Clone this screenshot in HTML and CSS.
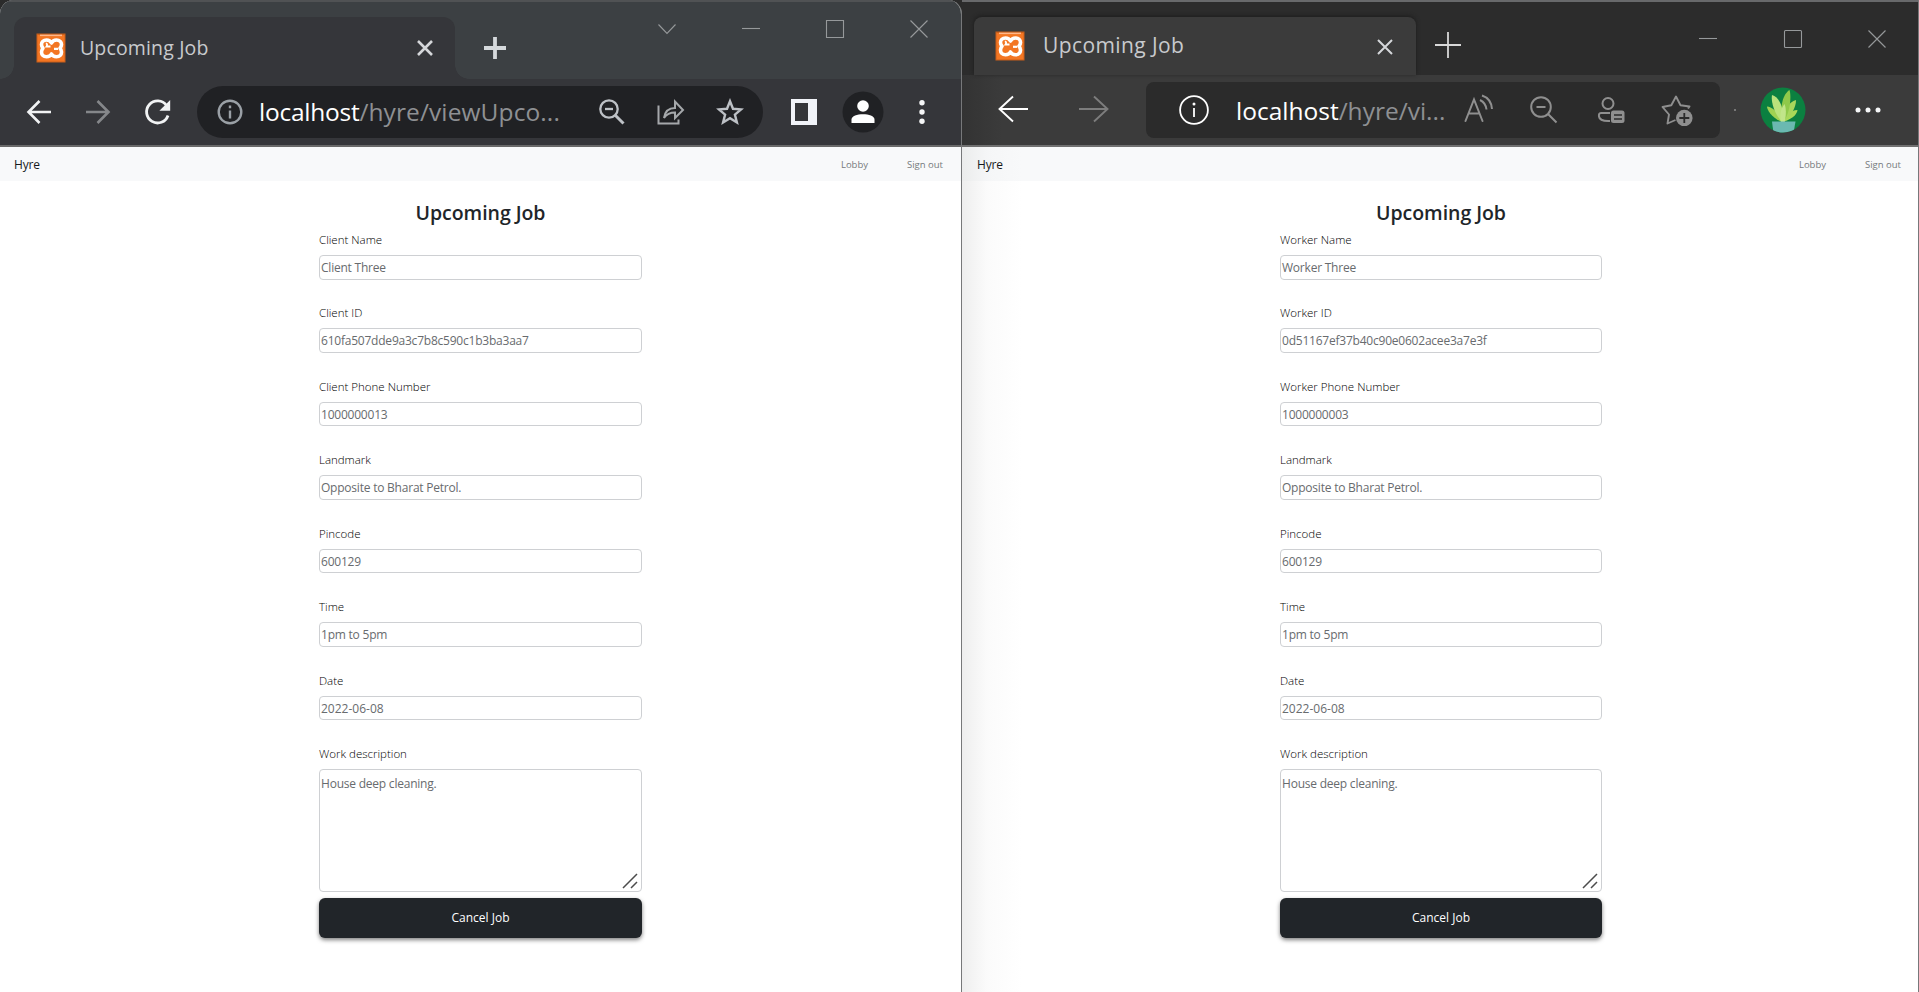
FILE: index.html
```html
<!DOCTYPE html>
<html lang="en">
<head>
<meta charset="utf-8">
<title>Upcoming Job</title>
<link rel="stylesheet" href="styles.css">
</head>
<body>
<svg class="defs" width="0" height="0">
  <symbol id="xampp" viewBox="0 0 30 30">
    <rect x=".5" y=".5" width="29" height="29" fill="#c95f1a"/>
    <rect x="1.500" y="2" width="27" height="26.500" fill="#f37623"/>
    <rect x="4" y="1.600" width="22" height="1.500" fill="#ffb78a"/>
    <path d="M15.500 10C14.500 8 12.500 7 10.500 7 7.500 7 5.500 9 5.500 11.500c0 1.500.5 2.500 1.500 3.700C6 16.500 5.500 17.700 5.500 19c0 3 2 4.800 5 4.800 2 0 4-.8 5-2.800 1 2 3 2.800 5 2.800 3 0 5-1.800 5-4.800 0-1.300-.5-2.500-1.500-3.800 1-1.200 1.500-2.200 1.500-3.700 0-2.500-2-4.500-5-4.500-2 0-4 1-5 3z" fill="none" stroke="#fff" stroke-width="3.600" stroke-linejoin="round"/>
    <path d="M9.800 10.500c1.500 0 1.700 1.500.7 3h4" stroke="#fff" stroke-width="1.800"/>
    <path d="M18 15.800h4" stroke="#fff" stroke-width="2.200"/>
  </symbol>
  <symbol id="close" viewBox="0 0 18 18"><path d="M2 2l14 14M16 2L2 16" fill="none" stroke="currentColor"/></symbol>
</svg>
<main class="desktop">
  <section class="window chrome">
    <header class="titlebar">
      <div class="tab">
        <svg class="favicon" width="30" height="30"><use href="#xampp"/></svg>
        <span class="tab-title">Upcoming Job</span>
        <svg class="tab-close" width="18" height="18"><use href="#close"/></svg>
      </div>
      <svg class="new-tab" width="24" height="24" viewBox="0 0 24 24"><path d="M12 1v22M1 12h22" stroke="#d5d9dc" stroke-width="3.800"/></svg>
      <div class="controls">
        <svg width="20" height="20" viewBox="0 0 20 20"><path d="M1.500 5.500l8.500 9 8.500-9"/></svg>
        <svg width="20" height="20" viewBox="0 0 20 20"><path d="M1 9.500h18"/></svg>
        <svg width="20" height="20" viewBox="0 0 20 20"><path d="M1.500 1.500h17v17h-17z"/></svg>
        <svg width="20" height="20" viewBox="0 0 20 20"><path d="M1.500 1.500l17 17M18.500 1.500l-17 17"/></svg>
      </div>
    </header>
    <div class="toolbar">
      <svg class="ico back" viewBox="0 0 28 28"><path d="M26 14H4M14.500 3L3.500 14l11 11" stroke="#f1f3f4" stroke-width="2.600"/></svg>
      <svg class="ico fwd" viewBox="0 0 28 28"><path d="M2 14h22M13.500 3l11 11-11 11" stroke="#85878a" stroke-width="2.600"/></svg>
      <svg class="ico reload" viewBox="0 0 28 28"><path d="M22.500 7.500A11 11 0 1 0 24 17.500" stroke="#f1f3f4" stroke-width="2.800"/><path d="M26.200 2v10.800H15.400z" fill="#f1f3f4"/></svg>
      <div class="omnibox">
        <svg class="ico" viewBox="0 0 28 28"><g stroke="#9aa0a6" stroke-width="2.400"><circle cx="14" cy="14" r="11.300"/><path d="M14 12.500v8M14 7.500v2.700"/></g></svg>
        <span class="url"><b>localhost</b>/hyre/viewUpco...</span>
        <svg class="ico zoom" viewBox="0 0 28 28"><g stroke="#bdc1c6" stroke-width="2.300"><circle cx="11" cy="11" r="8.700"/><path d="M7 11h8"/><path d="M17.500 17.500l8 8" stroke-width="3"/></g></svg>
        <svg class="ico share" viewBox="0 0 28 28"><g stroke="#a5a8ab" stroke-width="2"><path d="M1.500 7.500v18h20v-4M7 20c1-7 5-10 11-10V3.500l8 8.500-8 8v-5.500c-5 0-8 1-11 5.500z" /></g></svg>
        <svg class="ico star" viewBox="0 0 28 28"><path d="M14 3.200l3 7.600 8.100.6-6.200 5.200 2 7.900-6.900-4.300-6.900 4.300 2-7.900-6.200-5.200 8.100-.6z" stroke="#bdc1c6" stroke-width="2.400"/></svg>
      </div>
      <svg class="ico panel" viewBox="0 0 28 28"><path fill="#f1f3f8" d="M1 1h26v26H1z"/><path fill="#35363a" d="M5 5h13v18H5z"/></svg>
      <svg class="profile" width="42" height="42" viewBox="0 0 42 42"><circle cx="21" cy="21" r="20.500" fill="#202124"/><circle cx="21" cy="15" r="5.800" fill="#fff"/><path d="M9.500 32v-3.500c0-7 23-7 23 0V32z" fill="#fff"/></svg>
      <svg class="dots" width="8" height="28" viewBox="0 0 8 28"><circle cx="4" cy="4.700" r="2.700"/><circle cx="4" cy="14" r="2.700"/><circle cx="4" cy="23.300" r="2.700"/></svg>
    </div>
    <nav class="navbar"><a class="brand">Hyre</a><a class="lobby">Lobby</a><a>Sign out</a></nav>
    <form class="job">
      <h1>Upcoming Job</h1>
      <div class="field"><label>Client Name</label><div class="input">Client Three</div></div>
      <div class="field"><label>Client ID</label><div class="input id">610fa507dde9a3c7b8c590c1b3ba3aa7</div></div>
      <div class="field"><label>Client Phone Number</label><div class="input">1000000013</div></div>
      <div class="field"><label>Landmark</label><div class="input">Opposite to Bharat Petrol.</div></div>
      <div class="field"><label>Pincode</label><div class="input">600129</div></div>
      <div class="field"><label>Time</label><div class="input">1pm to 5pm</div></div>
      <div class="field"><label>Date</label><div class="input date">2022-06-08</div></div>
      <div class="field last"><label>Work description</label><div class="input area">House deep cleaning.<svg class="grip" width="16" height="16" viewBox="0 0 16 16"><path d="M1 15L15 1M9 15l6-6"/></svg></div></div>
      <button type="button">Cancel Job</button>
    </form>
  </section>
  <section class="window edge">
    <header class="titlebar">
      <div class="tab">
        <svg class="favicon" width="30" height="30"><use href="#xampp"/></svg>
        <span class="tab-title">Upcoming Job</span>
        <svg class="tab-close" width="18" height="18"><use href="#close"/></svg>
      </div>
      <svg class="new-tab" width="26" height="26" viewBox="0 0 26 26"><path d="M13 0v26M0 13h26" stroke="#d8d8d8" stroke-width="1.800"/></svg>
      <div class="controls">
        <svg width="20" height="20" viewBox="0 0 20 20"><path d="M1 9.500h18"/></svg>
        <svg width="20" height="20" viewBox="0 0 20 20"><rect x="1.500" y="1.500" width="17" height="17" rx="1"/></svg>
        <svg width="20" height="20" viewBox="0 0 20 20"><path d="M1.500 1.500l17 17M18.500 1.500l-17 17"/></svg>
      </div>
    </header>
    <div class="toolbar">
      <svg class="ico back" viewBox="0 0 32 32"><path d="M31 15H3M16 2.500L2.500 15 16 27.500" stroke="#fff" stroke-width="1.900"/></svg>
      <svg class="ico fwd" viewBox="0 0 32 32"><path d="M1 15h28M16 2.500L29.500 15 16 27.500" stroke="#7d7d7d" stroke-width="1.900"/></svg>
      <div class="omnibox">
        <svg class="ico" viewBox="0 0 32 32"><g stroke="#fff" stroke-width="1.800"><circle cx="16" cy="16" r="13.900"/><path d="M16 14v9"/></g><circle cx="16" cy="10" r="1.500" fill="#fff"/></svg>
        <span class="url"><b>localhost</b>/hyre/vi...</span>
        <svg class="ico read" viewBox="0 0 32 32"><g stroke="#8f8f8f" stroke-width="2"><path d="M3.500 27L12 5.500 20.500 27M6.500 19.500h11" stroke-linecap="round"/><path d="M18 6c4 2 6 5 6.500 9.500M20 1.500c6 2 9.500 7 10 13.500"/></g></svg>
        <svg class="ico ezoom" viewBox="0 0 32 32"><g stroke="#8f8f8f" stroke-width="2"><circle cx="13" cy="13" r="9.800"/><path d="M8.500 13h9M20 20l8.500 8.500"/></g></svg>
        <svg class="ico person" viewBox="0 0 32 32"><g stroke="#8f8f8f" stroke-width="2"><circle cx="13" cy="9.500" r="5.500"/><path d="M15 19H6c-2.200 0-2.200 2-2 3.500.5 3.500 5 4.800 11 4.500"/></g><rect x="16" y="16.500" width="13.500" height="12.500" rx="2.500" fill="#8f8f8f"/><path d="M19 21h8M19 25h8" stroke="#2b2b2b" stroke-width="1.500"/></svg>
        <svg class="ico fav" viewBox="0 0 32 32"><path d="M14.500 26L6.500 29.500 8 20.500 1.500 13l8.800-1.700L15 2.500l4.500 8.700 9 1.300-1.500 2" stroke="#8f8f8f" stroke-width="1.900" stroke-linejoin="round"/><circle cx="23.300" cy="24" r="8.300" fill="#8f8f8f"/><path d="M23.300 19v10M18.300 24h10" stroke="#2b2b2b" stroke-width="1.800"/></svg>
      </div>
      <i class="speck"></i>
      <svg class="profile" width="46" height="46" viewBox="0 0 46 46">
        <clipPath id="disc"><circle cx="23" cy="23" r="22.500"/></clipPath>
        <g clip-path="url(#disc)"><path fill="#0b8040" d="M0 0h46v46H0z"/>
        <path d="M22 35C12 31 7 23 7 19.500c6 .5 13 7.500 15 15.500z" fill="#9fd152"/>
        <path d="M23 35c12-4 14-9 14.500-12-7 .5-12.500 5-14.500 12z" fill="#a9d957"/>
        <path d="M23 35c-1-11 6-20 13-22 .5 7-6 18-13 22z" fill="#a6d65c"/>
        <path d="M23 35c-4-15 0-28 6.500-32 2.500 8-.5 26-6.500 32z" fill="#8fc94a"/>
        <path d="M22 35C13 25 11 13 12 8c7 2 12 12 11 27z" fill="#b9e27c"/>
        <path d="M21 36c-1.500-8-.5-14 3.500-19 2.500 6 1 14 0 19z" fill="#c1e58a"/>
        <path fill="#6bb9b1" d="M12 34.500h23.500L33.500 46h-20z"/></g>
      </svg>
      <svg class="dots" width="28" height="8" viewBox="0 0 28 8"><circle cx="4" cy="4" r="2.500"/><circle cx="14" cy="4" r="2.500"/><circle cx="24" cy="4" r="2.500"/></svg>
    </div>
    <nav class="navbar"><a class="brand">Hyre</a><a class="lobby">Lobby</a><a>Sign out</a></nav>
    <form class="job">
      <h1>Upcoming Job</h1>
      <div class="field"><label>Worker Name</label><div class="input">Worker Three</div></div>
      <div class="field"><label>Worker ID</label><div class="input id">0d51167ef37b40c90e0602acee3a7e3f</div></div>
      <div class="field"><label>Worker Phone Number</label><div class="input">1000000003</div></div>
      <div class="field"><label>Landmark</label><div class="input">Opposite to Bharat Petrol.</div></div>
      <div class="field"><label>Pincode</label><div class="input">600129</div></div>
      <div class="field"><label>Time</label><div class="input">1pm to 5pm</div></div>
      <div class="field"><label>Date</label><div class="input date">2022-06-08</div></div>
      <div class="field last"><label>Work description</label><div class="input area">House deep cleaning.<svg class="grip" width="16" height="16" viewBox="0 0 16 16"><path d="M1 15L15 1M9 15l6-6"/></svg></div></div>
      <button type="button">Cancel Job</button>
    </form>
  </section>
</main>
</body>
</html>
```

FILE: styles.css
```css
* { box-sizing: border-box; }
body { margin: 0; font-family: "Open Sans", "Noto Sans", sans-serif; background: #fff; }
.defs { display: block; position: absolute; }
.desktop { display: grid; grid-template-columns: 962px 957px; height: 992px; overflow: hidden; background: #2b2b2b; }
.window { display: flex; flex-direction: column; background: #fff; height: 992px; border-right: 1px solid #77787a; }
svg { display: block; flex: none; fill: none; }

/* title bars */
.titlebar { display: flex; align-items: flex-start; flex: none; border-top: 2px solid #68696b; }
.chrome .titlebar { height: 79px; background: #3c4043; border-top-color: #505254; }
.chrome { border-top-left-radius: 14px; border-top-right-radius: 14px; overflow: hidden; }
.edge .titlebar { height: 75px; background: #2c2c2c; }
.tab { position: relative; display: flex; align-items: center; color: #c8cacd; white-space: nowrap; }
.chrome .tab { width: 441px; height: 62px; margin: 15px 0 0 14px; padding: 0 21px 0 22px; border-radius: 12px 12px 0 0; background: #35363a; }
.chrome .tab::before, .chrome .tab::after { content: ""; position: absolute; bottom: 0; width: 14px; height: 14px; }
.chrome .tab::before { left: -14px; background: radial-gradient(circle at 0 0, transparent 13.500px, #35363a 14px); }
.chrome .tab::after { right: -14px; background: radial-gradient(circle at 100% 0, transparent 13.500px, #35363a 14px); }
.edge .tab { width: 442px; height: 58px; margin: 15px 0 0 12px; padding: 0 22px 0 21px; border-radius: 8px 8px 0 0; background: #3b3b3b; box-shadow: 0 -1px 4px #1c1c1c; }
.tab-title { flex: 1; line-height: 30px; }
.chrome .tab-title { margin-left: 14px; font-size: 19.500px; letter-spacing: .15px; }
.edge .tab-title { margin-left: 18px; font-size: 21px; letter-spacing: .4px; padding-bottom: 2px; }
.tab-close { color: #d5d7da; stroke-width: 2.600; }
.edge .tab-close { stroke-width: 2; margin-top: 2px; }
.chrome .new-tab { margin: 34px 0 0 28px; }
.edge .new-tab { margin: 30px 0 0 19px; }
.controls { display: flex; margin-left: auto; }
.controls svg { stroke: #96999b; stroke-width: 1.100; }
.chrome .controls { gap: 64px; padding: 17px 32px 0 0; }
.edge .controls { gap: 64.500px; padding: 27px 31px 0 0; }

/* toolbars */
.toolbar { display: flex; align-items: center; flex: none; border-bottom: 2px solid #696969; }
.chrome .toolbar { height: 68px; padding-left: 25px; background: #35363a; }
.edge .toolbar { height: 72px; padding-left: 35px; background: linear-gradient(90deg, #333 0, #3b3b3b 40px); border-bottom-color: #707070; }
.chrome .ico { width: 28px; height: 28px; }
.edge .ico { width: 32px; height: 32px; }
.chrome .fwd { margin-left: 31px; }
.chrome .reload { margin-left: 32px; }
.omnibox { display: flex; align-items: center; white-space: nowrap; }
.chrome .omnibox { width: 566px; height: 52px; margin-left: 25px; padding-left: 19px; border-radius: 26px; background: #202124; }
.edge .omnibox { width: 574px; height: 56px; margin-left: 36px; padding-left: 32px; border-radius: 8px; background: #2b2b2b; }
.url { color: #8e9093; }
.url b { color: #fff; font-weight: 400; }
.chrome .url { width: 339px; margin-left: 15px; padding-bottom: 2px; font-size: 24.500px; letter-spacing: .1px; }
.edge .url { width: 226px; margin-left: 26px; font-size: 24.500px; letter-spacing: 0; }
.chrome .url b { letter-spacing: -.25px; }
.share { margin-left: 31px; }
.star { margin-left: 31px; }
.panel { margin-left: 27px; }
.chrome .profile { margin-left: 24px; }
.dots { fill: #f5f6f7; }
.chrome .dots { margin-left: 34px; }
.edge .fwd { margin-left: 49px; }
.ezoom { margin-left: 34px; }
.person { margin-left: 35px; }
.fav { margin-left: 34px; }
.speck { width: 2px; height: 2px; margin-left: 14px; background: #777; }
.edge .profile { margin-left: 24px; }
.edge .dots { margin-left: 48px; }

/* page */
.navbar { display: flex; align-items: center; flex: none; height: 34px; background: #f8f9fa; font-size: 9.500px; color: #76797c; line-height: 20px; padding-top: 2px; }
.chrome .navbar { padding-left: 14px; padding-right: 18px; }
.edge .navbar { padding-left: 15px; padding-right: 17px; }
.brand { margin-right: auto; font-size: 12px; letter-spacing: -.15px; color: #17191c; }
.lobby { margin-right: 39px; }
.job { display: flex; flex-direction: column; color: #212529; }
.chrome .job { width: 323px; margin-left: 319px; }
.edge .job { width: 322px; margin-left: 318px; }
.edge { background: linear-gradient(90deg, #eee 0, #fbfbfb 25px, #fff 60px); }
.edge .navbar { background: linear-gradient(90deg, #ebecec 0, #f5f6f7 25px, #f8f9fa 60px); }
h1 { margin: 17px 0 0; height: 32px; line-height: 30px; font-size: 19.500px; font-weight: 600; text-align: center; letter-spacing: -.05px; }
.field { height: 73.450px; flex: none; }
label { display: block; height: 25px; line-height: 20px; font-size: 11.500px; font-weight: 300; color: #000; }
.input { height: 24.500px; padding-left: 1px; border: 1px solid #ced0d3; border-radius: 4px; line-height: 24px; font-size: 12px; letter-spacing: -.22px; color: #686b6e; background: #fff; white-space: nowrap; }
.date { letter-spacing: 0; }
.last { height: 129px; height: 154px; margin-bottom: -5px; }
.last { height: 153.800px; margin-bottom: 0; }
.area { position: relative; height: 123px; padding-top: 2px; }
.grip { position: absolute; right: 3px; bottom: 2px; stroke: #4c4c4c; stroke-width: 1.500; }
button { height: 40px; border: 0; border-radius: 6px; background: #212529; color: #fff; font: 400 12px "Open Sans", sans-serif; box-shadow: 0 2px 4px rgba(0,0,0,.5); }
```
